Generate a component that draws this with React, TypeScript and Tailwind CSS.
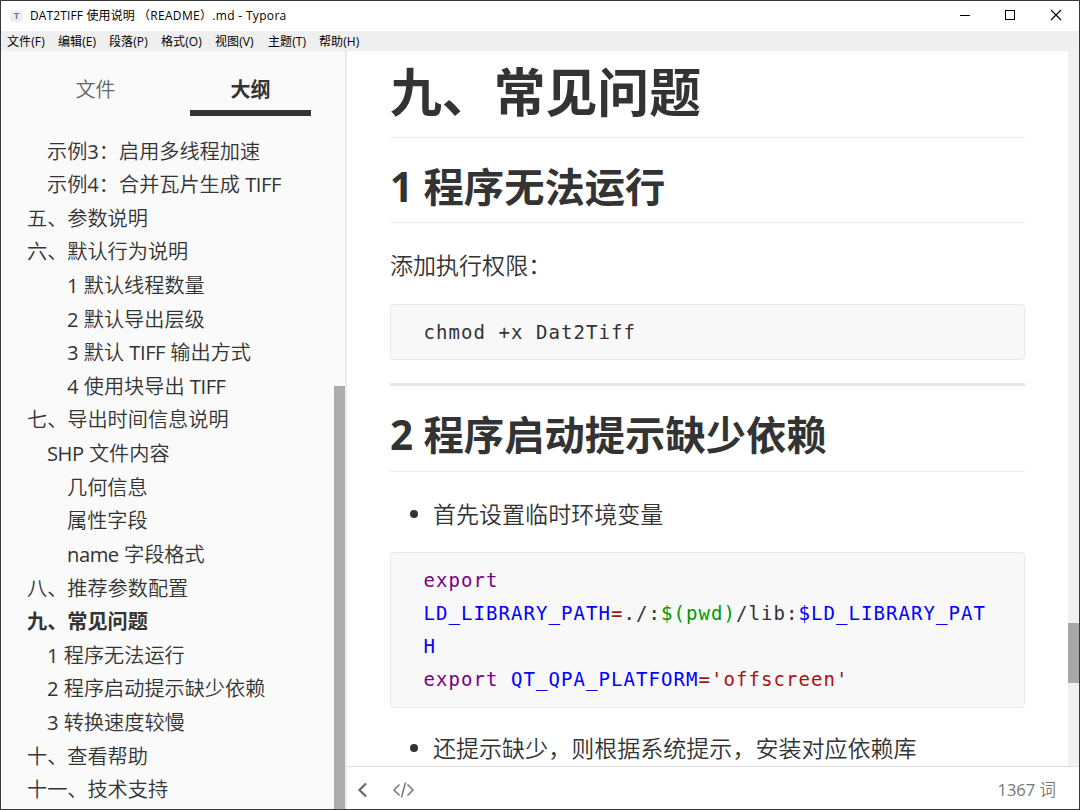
import React from 'react';

const menus = [
  { label: '文件(F)', width: 'w-[51px]' },
  { label: '编辑(E)', width: 'w-[51px]' },
  { label: '段落(P)', width: 'w-[52px]' },
  { label: '格式(O)', width: 'w-[54px]' },
  { label: '视图(V)', width: 'w-[53px]' },
  { label: '主题(T)', width: 'w-[51px]' },
  { label: '帮助(H)', width: 'w-[51px]' },
];

const outline = [
  { text: '示例3：启用多线程加速', level: 2 },
  { text: '示例4：合并瓦片生成 TIFF', level: 2 },
  { text: '五、参数说明', level: 1 },
  { text: '六、默认行为说明', level: 1 },
  { text: '1 默认线程数量', level: 3 },
  { text: '2 默认导出层级', level: 3 },
  { text: '3 默认 TIFF 输出方式', level: 3 },
  { text: '4 使用块导出 TIFF', level: 3 },
  { text: '七、导出时间信息说明', level: 1 },
  { text: 'SHP 文件内容', level: 2 },
  { text: '几何信息', level: 3 },
  { text: '属性字段', level: 3 },
  { text: 'name 字段格式', level: 3 },
  { text: '八、推荐参数配置', level: 1 },
  { text: '九、常见问题', level: 1, active: true },
  { text: '1 程序无法运行', level: 2 },
  { text: '2 程序启动提示缺少依赖', level: 2 },
  { text: '3 转换速度较慢', level: 2 },
  { text: '十、查看帮助', level: 1 },
  { text: '十一、技术支持', level: 1 },
];

const indent: Record<number, string> = {
  1: 'pl-[26px]',
  2: 'pl-[46px]',
  3: 'pl-[66px]',
};

// Latin words and digits keep the regular weight next to the thinner CJK glyphs
function MixedText({ text }: { text: string }) {
  return (
    <>
      {text.split(/([A-Za-z0-9]+)/).map((part, i) =>
        i % 2 === 1 ? (
          <span key={i} className={part.length > 1 ? 'font-normal tracking-[-0.45px]' : 'font-normal'}>{part}</span>
        ) : (
          part
        )
      )}
    </>
  );
}

function TitleBar() {
  return (
    <div className="flex h-[30px] shrink-0 items-center bg-white text-[12px] text-black">
      <div className="ml-[9px] flex h-[12px] w-[13px] items-center justify-center rounded-sm bg-[#eeeeee] font-['Liberation_Sans',sans-serif] text-[9px] leading-none font-bold text-[#777]">
        T
      </div>
      <span className="ml-[7px] leading-[20px] tracking-[0.13px] whitespace-pre">
        DAT2TIFF 使用说明<span className="ml-[3px] tracking-[0.32px]">（README）.md - Typora</span>
      </span>
      <div className="ml-auto flex">
        <svg width="46" height="30" viewBox="0 0 46 30" shapeRendering="crispEdges">
          <path d="M17 14.5h10" stroke="#000" />
        </svg>
        <svg width="46" height="30" viewBox="0 0 46 30" shapeRendering="crispEdges">
          <rect x="16.5" y="9.5" width="9" height="9" fill="none" stroke="#000" />
        </svg>
        <svg width="44" height="30" viewBox="0 0 44 30">
          <path d="M16 9l10 10M26 9l-10 10" stroke="#000" strokeWidth="1.1" />
        </svg>
      </div>
    </div>
  );
}

function MenuBar() {
  return (
    <div className="flex h-[20px] shrink-0 bg-[#efefef] pl-[6px] text-[12px] leading-[21px] tracking-[0.1px] text-black">
      {menus.map(m => (
        <span key={m.label} className={`${m.width} whitespace-nowrap`}>{m.label}</span>
      ))}
    </div>
  );
}

function Sidebar() {
  return (
    <div className="flex w-[346px] shrink-0 flex-col border-r-2 border-[#ececec] bg-[#fafafa] font-[350]">
      <div className="flex h-[65px] shrink-0 gap-[34px] pl-[34px] text-center text-[20px] leading-[77px]">
        <div className="h-[65px] w-[121px] text-[#666]">文件</div>
        <div className="h-[65px] w-[121px] border-b-[6px] border-[#333] font-bold text-[#333]">大纲</div>
      </div>
      <div className="flex min-h-0 flex-1">
        <div className="flex-1 overflow-hidden pt-[18.6px]">
          {outline.map(item => (
            <div
              key={item.text}
              className={`${indent[item.level]} ${item.active ? 'font-bold' : ''} h-[33.62px] text-[20.16px] leading-[33.62px] whitespace-pre text-[#333]`}
            >
              <MixedText text={item.text} />
            </div>
          ))}
        </div>
        <div className="flex w-[11px] flex-col justify-end">
          <div className="h-[423px] bg-[#adadad]" />
        </div>
      </div>
    </div>
  );
}

function CodeBlock({ children }: { children: React.ReactNode }) {
  return (
    <pre className="rounded-[4px] border border-[#e7eaed] bg-[#f8f8f8] pl-[32.5px] font-['DejaVu_Sans_Mono',monospace] text-[19px] leading-[33px] tracking-[1.06px] text-[#333]">
      {children}
    </pre>
  );
}

function Bullet({ children }: { children: React.ReactNode }) {
  return (
    <div className="flex h-[34px] items-center pl-[20px]">
      <span className="size-[8px] rounded-full bg-[#333]" />
      <span className="ml-[15px] text-[23.04px] leading-[34px] whitespace-nowrap">{children}</span>
    </div>
  );
}

function Editor() {
  return (
    <div className="flex min-h-0 flex-1">
      <div className="flex-1 overflow-hidden pr-[43px] pl-[43px] font-[350] text-[#333]">
        <h1 className="h-[87px] border-b border-[#eee] text-[51.84px] leading-[83px] font-bold">九、常见问题</h1>
        <h2 className="h-[85px] border-b border-[#eee] text-[40.32px] leading-[97px] font-bold">1 程序无法运行</h2>
        <p className="mt-[25px] h-[35px] text-[23.04px] leading-[34px]">添加执行权限：</p>
        <div className="mt-[21px] h-[56px] font-normal">
          <CodeBlock>
            <div className="h-[54px] pt-[11px]">chmod +x Dat2Tiff</div>
          </CodeBlock>
        </div>
        <div className="mt-[23px] h-[3px] bg-[#e7e7e7]" />
        <h2 className="h-[86px] border-b border-[#eee] text-[40.32px] leading-[97px] font-bold">2 程序启动提示缺少依赖</h2>
        <div className="mt-[25px]">
          <Bullet>首先设置临时环境变量</Bullet>
        </div>
        <div className="mt-[21px] font-normal">
          <CodeBlock>
            <div className="h-[154px] pt-[11px]">
              <div className="text-[#770088]">export</div>
              <div>
                <span className="text-[#0000ff]">LD_LIBRARY_PATH</span>
                <span className="text-[#981a1a]">=</span>./:<span className="text-[#009900]">$(pwd)</span>/lib:<span className="text-[#0000ff]">$LD_LIBRARY_PAT</span>
              </div>
              <div className="text-[#0000ff]">H</div>
              <div>
                <span className="text-[#770088]">export</span> <span className="text-[#0000ff]">QT_QPA_PLATFORM</span>
                <span className="text-[#981a1a]">=</span>
                <span className="text-[#aa1111]">'offscreen'</span>
              </div>
            </div>
          </CodeBlock>
        </div>
        <div className="mt-[23px]">
          <Bullet>还提示缺少，则根据系统提示，安装对应依赖库</Bullet>
        </div>
      </div>
      <div className="w-[11px] shrink-0 bg-[#f1f1f1] pt-[572px]">
        <div className="h-[60px] bg-[#a8a8a8]" />
      </div>
    </div>
  );
}

function StatusBar() {
  return (
    <div className="flex h-[43px] shrink-0 items-center border-t border-[#ddd] bg-white pt-[3px] text-[#777]">
      <svg className="ml-[10px]" width="12" height="16" viewBox="0 0 12 16" fill="none" stroke="#666" strokeWidth="2.2">
        <path d="M9 1.5L2.5 8L9 14.5" />
      </svg>
      <svg className="ml-[22px]" width="24" height="16" viewBox="0 0 24 16" fill="none" stroke="#777" strokeWidth="1.5">
        <path d="M8.5 2.5L3 8l5.5 5.5M16.5 2.5L22 8l-5.5 5.5M14.5 0.5L10.5 15.5" />
      </svg>
      <span className="mr-[23px] ml-auto text-[16.5px] leading-[24px]">
        1367 <span className="font-[350]">词</span>
      </span>
    </div>
  );
}

export default function App() {
  return (
    <div className="flex h-[810px] w-[1080px] flex-col overflow-hidden border border-[#383838] bg-white font-['Open_Sans','Noto_Sans_CJK_SC',sans-serif]">
      <TitleBar />
      <MenuBar />
      <div className="flex min-h-0 flex-1">
        <Sidebar />
        <div className="flex min-w-0 flex-1 flex-col">
          <Editor />
          <StatusBar />
        </div>
      </div>
    </div>
  );
}
